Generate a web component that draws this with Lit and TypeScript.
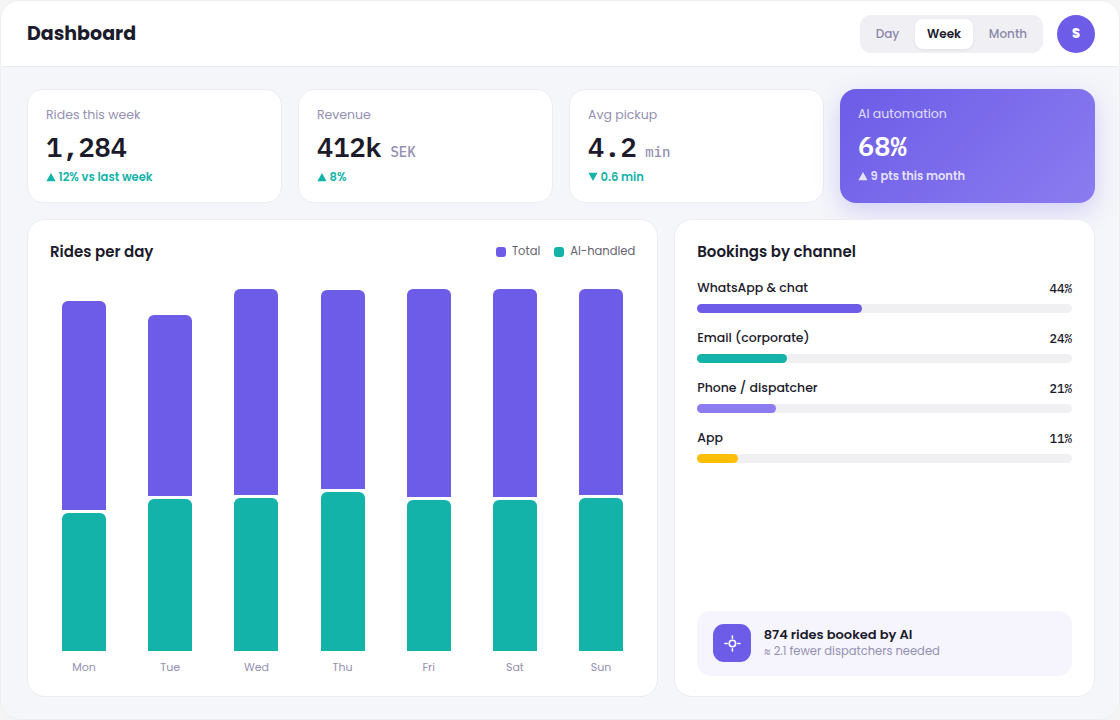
import { LitElement, html, css, svg } from "lit";
import { customElement } from "lit/decorators.js";
import { classMap } from "lit/directives/class-map.js";

const stats = [
  { k: "rides", label: "Rides this week", value: "1,284", unit: "", dir: "up", delta: "12% vs last week", hot: false },
  { k: "rev", label: "Revenue", value: "412k", unit: "SEK", dir: "up", delta: "8%", hot: false },
  { k: "pick", label: "Avg pickup", value: "4.2", unit: "min", dir: "down", delta: "0.6 min", hot: false },
  { k: "auto", label: "AI automation", value: "68%", unit: "", dir: "up", delta: "9 pts this month", hot: true },
];
const days = [
  { day: "Mon", total: 209, ai: 138 },
  { day: "Tue", total: 181, ai: 152 },
  { day: "Wed", total: 206, ai: 153 },
  { day: "Thu", total: 199, ai: 159 },
  { day: "Fri", total: 208, ai: 151 },
  { day: "Sat", total: 208, ai: 151 },
  { day: "Sun", total: 206, ai: 153 },
];
const channels = [
  { name: "WhatsApp & chat", pct: 44, tone: "violet" },
  { name: "Email (corporate)", pct: 24, tone: "teal" },
  { name: "Phone / dispatcher", pct: 21, tone: "lilac" },
  { name: "App", pct: 11, tone: "amber" },
];

@customElement("app-root")
export class AppRoot extends LitElement {
  static styles = css`
    :host { display: block; width: 1120px; height: 720px; background: #f5f5f6; font-family: Poppins, Inter, sans-serif; color: #1c1b2b; }
    * { box-sizing: border-box; }
    .app { height: 720px; display: flex; flex-direction: column; border: 1px solid #efeff2; border-radius: 20px; overflow: hidden; background: #f5f6fa; }
    header { height: 66px; flex: none; background: #fff; border-bottom: 1px solid #ebebef; padding: 0 24px 0 26px; display: flex; align-items: center; gap: 14px; }
    h1 { margin: 0 auto 0 0; font-size: 19px; font-weight: 700; line-height: 28px; white-space: nowrap; }
    .seg { display: flex; align-items: center; height: 38px; width: 183px; padding: 4px; background: #f0f0f4; border-radius: 11px; font-size: 12px; font-weight: 500; color: #8b87a9; }
    .seg span { height: 30px; line-height: 30px; text-align: center; }
    .day { width: 47px; } .week { width: 58px; margin: 0 4px; } .month { width: 62px; }
    .seg .on { background: #fff; color: #1c1b2b; font-weight: 600; border-radius: 8px; box-shadow: 0 1px 3px #1b193014; }
    .avatar { width: 38px; height: 38px; border-radius: 50%; background: #6c5ce7; color: #fff; font-size: 13px; font-weight: 800; line-height: 38px; text-align: center; }
    main { flex: 1; min-height: 0; padding: 22px 24px 22px 26px; display: flex; flex-direction: column; gap: 16px; }
    .stats { display: grid; grid-template-columns: repeat(4, 1fr); gap: 16px; height: 114px; flex: none; }
    .card { background: #fff; border: 1px solid #ececf1; border-radius: 18px; }
    .stat { padding: 15px 18px 0; border-radius: 16px; white-space: nowrap; }
    .label { font-size: 12.5px; line-height: 20px; color: #9490b2; }
    .value { display: flex; align-items: baseline; gap: 8.6px; margin-top: 3px; height: 38px; font: 600 27px/38px "IBM Plex Mono", "Liberation Mono", monospace; }
    .unit { font-size: 14px; font-weight: 500; color: #9490b2; }
    .delta { display: flex; align-items: center; gap: 2.5px; margin-top: 1px; font-size: 11.5px; line-height: 20px; font-weight: 600; color: #14b3a9; }
    .tri { width: 10px; height: 10px; }
    .hot { border: 0; background: linear-gradient(135deg, #6c5ce7, #8b7cf0); color: #fff; box-shadow: 0 8px 24px #6c5ce740; }
    .hot .label { color: #ffffffcc; } .hot .delta { color: #ffffffd0; }
    .panels { flex: 1; min-height: 0; display: grid; grid-template-columns: 1.5fr 1fr; gap: 16px; }
    .panel { position: relative; padding: 20px 22px; display: flex; flex-direction: column; min-width: 0; }
    .head { display: flex; align-items: center; justify-content: space-between; height: 24px; white-space: nowrap; }
    h2 { margin: 0; font-size: 15px; line-height: 24px; font-weight: 600; }
    .legend { display: flex; gap: 14px; margin-bottom: 2px; font-size: 11.5px; line-height: 20px; color: #65636f; }
    .legend span { display: flex; align-items: center; gap: 6px; }
    .legend i { width: 10px; height: 10px; border-radius: 3px; margin-top: 2px; }
    .chart { flex: 1; display: grid; grid-template-columns: repeat(7, 1fr); gap: 18px; }
    .col { display: flex; flex-direction: column; align-items: center; justify-content: flex-end; gap: 3px; }
    .bar { width: 44px; border-radius: 6px 6px 0 0; }
    .name { height: 20px; margin-top: 3px; font-size: 11px; line-height: 20px; color: #9490b2; }
    .panel.left { padding-bottom: 19px; }
    .violet { background: #6c5ce7; } .teal { background: #14b3a9; } .lilac { background: #8b7cf0; } .amber { background: #fdbf06; }
    .list { display: flex; flex-direction: column; gap: 15px; margin-top: 14px; }
    .row { display: flex; justify-content: space-between; height: 20px; font-size: 12.5px; line-height: 20px; font-weight: 500; }
    .pct { font: 500 12.5px/21px "IBM Plex Mono", "Liberation Mono", monospace; }
    .track { height: 9px; margin-top: 6px; border-radius: 5px; background: #f0f0f3; }
    .fill { height: 9px; border-radius: 5px; }
    .note { margin-top: auto; height: 65px; border-radius: 14px; background: #f6f5fe; display: flex; align-items: center; gap: 12.5px; padding: 0 16px 2px; white-space: nowrap; }
    .badge { width: 38px; height: 38px; border-radius: 11px; background: #6c5ce7; display: grid; place-items: center; }
    .badge svg { display: block; }
    .nt { font-size: 13px; line-height: 17px; font-weight: 600; }
    .ns { font-size: 11.5px; line-height: 17px; color: #9490b2; }
    .approx { font-family: Inter, sans-serif; font-size: 10.5px; }
  `;

  render() {
    return html`<div class="app">
      <header>
        <h1>Dashboard</h1>
        <div class="seg"><span class="day">Day</span><span class="week on">Week</span><span class="month">Month</span></div>
        <div class="avatar">S</div>
      </header>
      <main>
        <section class="stats">${stats.map((s) => html`
          <article class=${classMap({ card: true, stat: true, hot: s.hot, [s.k]: true })}>
            <div class="label"><span>${s.label}</span></div>
            <div class="value"><span>${s.value}</span>${s.unit ? html`<span class="unit">${s.unit}</span>` : ""}</div>
            <div class="delta"><svg class="tri" viewBox="0 0 10 10" fill="currentColor">${s.dir === "up" ? svg`<path d="M5 1 9.6 9.2H.4z"/>` : svg`<path d="M5 9 9.6.8H.4z"/>`}</svg><span>${s.delta}</span></div>
          </article>`)}
        </section>
        <section class="panels">
          <article class="card panel left">
            <div class="head"><h2>Rides per day</h2><div class="legend"><span><i class="violet"></i>Total</span><span><i class="teal"></i>AI-handled</span></div></div>
            <div class="chart">${days.map((d) => html`<div class="col">
              <div class="bar violet" style="height:${d.total}px"></div>
              <div class="bar teal" style="height:${d.ai}px"></div>
              <div class="name">${d.day}</div></div>`)}
            </div>
          </article>
          <article class="card panel right">
            <div class="head"><h2>Bookings by channel</h2></div>
            <div class="list">${channels.map((c) => html`<div>
              <div class="row"><span>${c.name}</span><span class="pct">${c.pct}%</span></div>
              <div class="track"><div class="fill ${c.tone}" style="width:${c.pct}%"></div></div></div>`)}
            </div>
            <div class="note">
              <div class="badge"><svg width="18" height="18" viewBox="0 0 18 18" fill="none" stroke="#fff" stroke-width="1.6" stroke-linecap="round"><circle cx="9.4" cy="9.5" r="3.2"/><path d="M9.4 2v2.2M9.4 14.8v2.2M1.9 9.5h2.3M14.6 9.5h2.3"/></svg></div>
              <div><div class="nt">874 rides booked by AI</div><div class="ns"><span class="approx">≈</span> 2.1 fewer dispatchers needed</div></div>
            </div>
          </article>
        </section>
      </main>
    </div>`;
  }
}
